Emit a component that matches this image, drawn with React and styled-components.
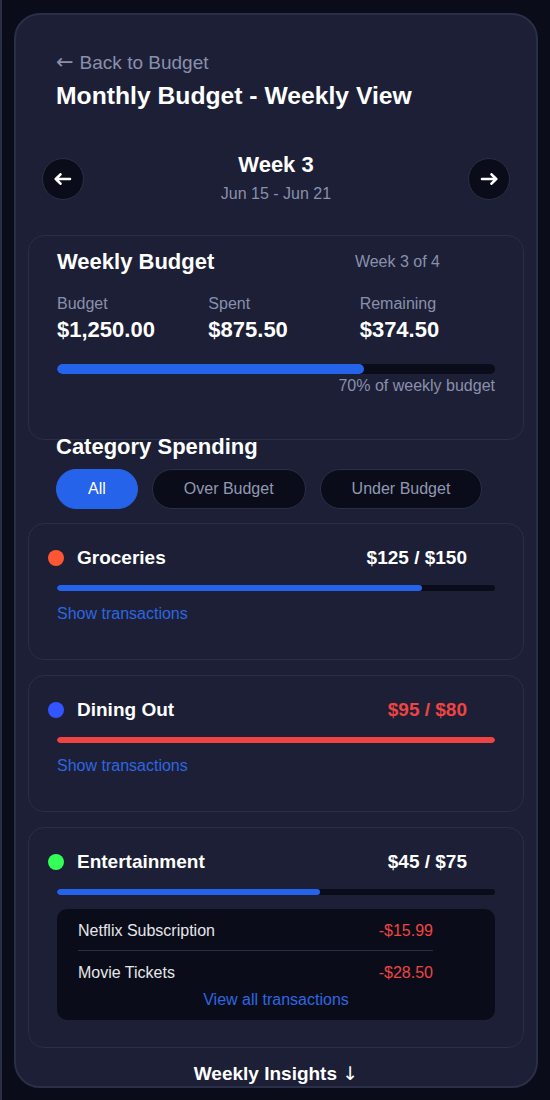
import styled, { createGlobalStyle } from "styled-components";

const GlobalStyle = createGlobalStyle`
    html, body {
        margin: 0;
        padding: 0;
        background: #0a0d19;
    }
    body {
        font-family: "Liberation Sans", Arial, sans-serif;
        color: #ffffff;
    }
    * { box-sizing: border-box; }
`

const Page = styled.div`
    min-height: 1100px;
    padding: 13px 12px 0 12px;
    border-left: 2px solid #2a2f45;
`

const Shell = styled.div`
    height: 1075px;
    overflow: hidden;
    background: #1c1f35;
    border: 2px solid #2a2f48;
    border-radius: 26px;
    padding: 36px 12px 0 12px;
`

const Header = styled.div`
    padding-left: 28px;
`

const BackLink = styled.a`
    display: block;
    color: #8a90ac;
    font-size: 19px;
    line-height: 22px;
    text-decoration: none;
    cursor: pointer;
`

const Glyph = styled.span`
    font-family: "DejaVu Sans", sans-serif;
    font-weight: 400;
    font-size: ${(p) => p.$size || "1em"};
    margin-right: ${(p) => p.$mr || 0}px;
`

const Title = styled.h1`
    margin: 8px 0 0 0;
    font-size: 24.7px;
    line-height: 28px;
    font-weight: 700;
`

const WeekNav = styled.div`
    display: flex;
    align-items: center;
    justify-content: space-between;
    padding: 0 14px;
    margin-top: 42px;
`

const RoundButton = styled.button`
    width: 42px;
    height: 42px;
    border-radius: 50%;
    background: #0a0d19;
    border: 1px solid #2a2f45;
    display: flex;
    align-items: center;
    justify-content: center;
    padding: 0;
    cursor: pointer;
    margin-top: 3px;
`

const WeekInfo = styled.div`
    text-align: center;
`

const WeekTitle = styled.div`
    font-size: 22px;
    line-height: 25px;
    font-weight: 700;
`

const WeekDates = styled.div`
    margin-top: 8px;
    font-size: 16px;
    line-height: 18px;
    color: #8a90ac;
`

const Panel = styled.div`
    border: 1px solid #2a2f45;
    border-radius: 16px;
    background: #1c1f35;
    padding: ${(p) => p.$pad};
    margin-top: ${(p) => p.$mt || 0}px;
`

const PanelHead = styled.div`
    display: flex;
    align-items: center;
    justify-content: space-between;
    padding-right: 55px;
`

const PanelTitle = styled.h2`
    margin: 0;
    font-size: 22px;
    line-height: 25px;
    font-weight: 700;
`

const Muted = styled.span`
    font-size: 16px;
    color: #8a90ac;
`

const Stats = styled.div`
    display: grid;
    grid-template-columns: repeat(3, 1fr);
    gap: 16px;
    margin-top: 21px;
`

const StatLabel = styled.div`
    font-size: 16px;
    line-height: 18px;
    color: #8a90ac;
`

const StatValue = styled.div`
    margin-top: 4px;
    font-size: 22px;
    line-height: 25px;
    font-weight: 700;
`

const Track = styled.div`
    height: ${(p) => p.$h}px;
    border-radius: ${(p) => p.$h / 2}px;
    background: #0a0d19;
    margin-top: ${(p) => p.$mt}px;
    overflow: hidden;
`

const Fill = styled.div`
    height: 100%;
    border-radius: inherit;
    background: ${(p) => (p.$over ? "#ef4444" : "#2563eb")};
`

const BarCaption = styled.div`
    text-align: right;
    font-size: 16px;
    line-height: 18px;
    color: #8a90ac;
    margin-top: 3px;
`

const Section = styled.div`
    padding-left: 28px;
`

const SectionTitle = styled.h2`
    margin: -6px 0 0 0;
    font-size: 22px;
    line-height: 25px;
    font-weight: 700;
`

const Filters = styled.div`
    display: flex;
    gap: 14px;
    margin-top: 10px;
`

const Pill = styled.button`
    height: 40px;
    padding: 0 31px;
    border-radius: 20px;
    font-family: inherit;
    font-size: 16px;
    cursor: pointer;
    border: 1px solid ${(p) => (p.$active ? "#2563eb" : "#2a2f45")};
    background: ${(p) => (p.$active ? "#2563eb" : "#0a0d19")};
    color: ${(p) => (p.$active ? "#ffffff" : "#9298b2")};
`

const CatHead = styled.div`
    display: flex;
    align-items: center;
    margin: 0 28px 0 -9px;
    font-size: 19px;
    line-height: 22px;
    font-weight: 700;
`

const Dot = styled.span`
    width: 16px;
    height: 16px;
    border-radius: 50%;
    background: ${(p) => p.$color};
    margin-right: 13px;
`

const CatName = styled.span`
    flex: 1;
`

const CatAmount = styled.span`
    color: ${(p) => (p.$over ? "#ef4444" : "#ffffff")};
`

const LinkText = styled.a`
    display: block;
    color: #2f66e0;
    font-size: 16px;
    line-height: 18px;
    cursor: pointer;
    text-align: ${(p) => (p.$center ? "center" : "left")};
    margin-top: ${(p) => p.$mt}px;
    margin-bottom: ${(p) => p.$mb || 0}px;
`

const TxBox = styled.div`
    margin-top: 14px;
    background: #0a0d19;
    border-radius: 10px;
    padding: 13px 0 11px 0;
`

const TxRow = styled.div`
    display: flex;
    justify-content: space-between;
    margin: 0 62px 0 21px;
    font-size: 16px;
    line-height: 18px;
    color: #e6e6ea;
    padding: ${(p) => (p.$first ? "0 0 10px 0" : "13px 0 0 0")};
    border-bottom: ${(p) => (p.$first ? "1px solid #2a2f45" : "none")};
`

const TxAmount = styled.span`
    color: #ef4444;
`

const Insights = styled.div`
    margin-top: 14px;
    text-align: center;
    font-size: 19px;
    line-height: 23px;
    font-weight: 700;
`

const Arrow = ({ dir }) => (
    <svg width="18" height="12" viewBox="0 0 18 12" fill="none" stroke="#fff" strokeWidth="2.6" strokeLinecap="round" strokeLinejoin="round">
        {dir === "left"
            ? <path d="M6.5 1.3 L1.8 6 L6.5 10.7 M1.8 6 H16" />
            : <path d="M11.5 1.3 L16.2 6 L11.5 10.7 M16.2 6 H2" />}
    </svg>
)

const categories = [
    { id: 1, name: "Groceries", color: "#ff5733", spent: 125, limit: 150 },
    { id: 2, name: "Dining Out", color: "#3355ff", spent: 95, limit: 80 },
    { id: 3, name: "Entertainment", color: "#33ff57", spent: 45, limit: 75, open: true },
]

const transactions = [
    { id: 1, name: "Netflix Subscription", amount: "-$15.99" },
    { id: 2, name: "Movie Tickets", amount: "-$28.50" },
]

const App = () => {
    return (
        <>
            <GlobalStyle />
            <Page>
                <Shell>
                    <Header>
                        <BackLink><Glyph $size="21px" $mr={6}>←</Glyph>Back to Budget</BackLink>
                        <Title>Monthly Budget - Weekly View</Title>
                    </Header>

                    <WeekNav>
                        <RoundButton aria-label="Previous week"><Arrow dir="left" /></RoundButton>
                        <WeekInfo>
                            <WeekTitle>Week 3</WeekTitle>
                            <WeekDates>Jun 15 - Jun 21</WeekDates>
                        </WeekInfo>
                        <RoundButton aria-label="Next week"><Arrow dir="right" /></RoundButton>
                    </WeekNav>

                    <Panel $pad="13px 28px 44px 28px" $mt={32}>
                        <PanelHead>
                            <PanelTitle>Weekly Budget</PanelTitle>
                            <Muted>Week 3 of 4</Muted>
                        </PanelHead>
                        <Stats>
                            <div>
                                <StatLabel>Budget</StatLabel>
                                <StatValue>$1,250.00</StatValue>
                            </div>
                            <div>
                                <StatLabel>Spent</StatLabel>
                                <StatValue>$875.50</StatValue>
                            </div>
                            <div>
                                <StatLabel>Remaining</StatLabel>
                                <StatValue>$374.50</StatValue>
                            </div>
                        </Stats>
                        <Track $h={10} $mt={22}>
                            <Fill style={{ width: "70%" }} />
                        </Track>
                        <BarCaption>70% of weekly budget</BarCaption>
                    </Panel>

                    <Section>
                        <SectionTitle>Category Spending</SectionTitle>
                        <Filters>
                            <Pill $active>All</Pill>
                            <Pill>Over Budget</Pill>
                            <Pill>Under Budget</Pill>
                        </Filters>
                    </Section>

                    {categories.map((cat, i) => {
                        const over = cat.spent > cat.limit
                        const pct = Math.min(100, (cat.spent / cat.limit) * 100)
                        return (
                            <Panel key={cat.id} $pad={cat.open ? "23px 28px 27px 28px" : "23px 28px 28px 28px"} $mt={i === 0 ? 14 : 15}>
                                <CatHead>
                                    <Dot $color={cat.color} />
                                    <CatName>{cat.name}</CatName>
                                    <CatAmount $over={over}>${cat.spent} / ${cat.limit}</CatAmount>
                                </CatHead>
                                <Track $h={6} $mt={16}>
                                    <Fill $over={over} style={{ width: pct + "%" }} />
                                </Track>
                                {cat.open ? (
                                    <TxBox>
                                        {transactions.map((tx, j) => (
                                            <TxRow key={tx.id} $first={j === 0}>
                                                <span>{tx.name}</span>
                                                <TxAmount>{tx.amount}</TxAmount>
                                            </TxRow>
                                        ))}
                                        <LinkText $center $mt={9}>View all transactions</LinkText>
                                    </TxBox>
                                ) : (
                                    <LinkText $mt={14} $mb={8}>Show transactions</LinkText>
                                )}
                            </Panel>
                        )
                    })}

                    <Insights>Weekly Insights <Glyph>↓</Glyph></Insights>
                </Shell>
            </Page>
        </>
    )
}

export default App
